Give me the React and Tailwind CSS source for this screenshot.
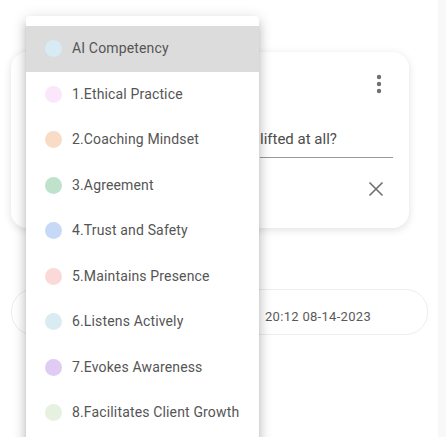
import { useState } from "react";

const competencies = [
  { label: "AI Competency", color: "bg-[#d6ebf3]" },
  { label: "1.Ethical Practice", color: "bg-[#fbe7fb]" },
  { label: "2.Coaching Mindset", color: "bg-[#f8dcc5]" },
  { label: "3.Agreement", color: "bg-[#bfe2cd]" },
  { label: "4.Trust and Safety", color: "bg-[#c6daf8]" },
  { label: "5.Maintains Presence", color: "bg-[#fcd9d9]" },
  { label: "6.Listens Actively", color: "bg-[#d8ecf1]" },
  { label: "7.Evokes Awareness", color: "bg-[#dfcbf4]" },
  { label: "8.Facilitates Client Growth", color: "bg-[#e6f2df]" },
];

const App = () => {
  const [selected, setSelected] = useState(0);

  return (
    <div className="relative w-[446px] h-[437px] overflow-hidden bg-white flex font-['Roboto',sans-serif]">
      {/* Main column */}
      <div className="w-[438px] h-full flex flex-col">
        {/* Question card */}
        <div className="ml-[11px] mt-[52px] w-[398px] h-[176px] rounded-2xl bg-white shadow-[0_2px_8px_rgba(0,0,0,0.12)] flex flex-col">
          <div className="flex justify-end pt-[22px] pr-[27px]">
            <svg width="6" height="20" viewBox="0 0 6 20">
              <circle cx="3" cy="3" r="2.2" fill="#707070" />
              <circle cx="3" cy="10" r="2.2" fill="#707070" />
              <circle cx="3" cy="17" r="2.2" fill="#707070" />
            </svg>
          </div>
          <div className="ml-[249px] mr-[16px] mt-[36px] pb-[9px] border-b border-[#9a9a9a] text-[15px] text-[#4d4d4d] leading-[18px]">
            lifted at all?
          </div>
          <div className="flex justify-end pr-[25px] mt-[23px]">
            <svg width="16" height="16" viewBox="0 0 16 16">
              <path d="M1.5 1.5 L14.5 14.5 M14.5 1.5 L1.5 14.5" stroke="#6e6e6e" strokeWidth="1.6" fill="none" />
            </svg>
          </div>
        </div>

        {/* Timestamp pill */}
        <div className="ml-[11px] mt-[61px] w-[417px] h-[46px] rounded-[22px] border border-[#ededed] bg-white flex items-center pt-[10px] pl-[253px]">
          <span className="text-[13px] tracking-[0.3px] text-[#5a5a5a]">20:12 08-14-2023</span>
        </div>
      </div>
      <div className="w-[8px] h-full bg-[#f8f8f8]" />

      {/* Dropdown menu */}
      <div className="absolute left-[26px] top-[16px] w-[233px] h-[440px] bg-white rounded-t-[4px] shadow-[0_5px_5px_-3px_rgba(0,0,0,0.2),0_8px_10px_1px_rgba(0,0,0,0.14),0_3px_14px_2px_rgba(0,0,0,0.12)] pt-[10px]">
        {competencies.map((c, i) => (
          <div
            key={c.label}
            onClick={() => setSelected(i)}
            className={`h-[45.5px] flex items-center pl-[19px] gap-[10px] cursor-pointer ${
              selected === i ? "bg-[#dcdcdc]" : "bg-white"
            }`}
          >
            <span className={`w-[17px] h-[17px] rounded-full ${c.color}`} />
            <span className="text-[14px] tracking-[0.15px] text-[#555555]">{c.label}</span>
          </div>
        ))}
      </div>
    </div>
  );
};

export default App;
